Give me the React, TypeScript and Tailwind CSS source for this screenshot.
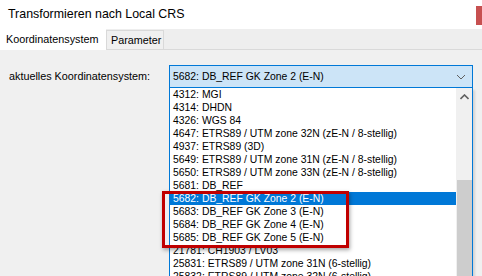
import React from "react";

const items = [
  "4312: MGI",
  "4314: DHDN",
  "4326: WGS 84",
  "4647: ETRS89 / UTM zone 32N (zE-N / 8-stellig)",
  "4937: ETRS89 (3D)",
  "5649: ETRS89 / UTM zone 31N (zE-N / 8-stellig)",
  "5650: ETRS89 / UTM zone 33N (zE-N / 8-stellig)",
  "5681: DB_REF",
  "5682: DB_REF GK Zone 2 (E-N)",
  "5683: DB_REF GK Zone 3 (E-N)",
  "5684: DB_REF GK Zone 4 (E-N)",
  "5685: DB_REF GK Zone 5 (E-N)",
  "21781: CH1903 / LV03",
  "25831: ETRS89 / UTM zone 31N (6-stellig)",
  "25832: ETRS89 / UTM zone 32N (6-stellig)",
];

export default function App() {
  return (
    <div
      className="relative w-[482px] h-[276px] overflow-hidden bg-[#f0f0f0] text-[10.8px] text-black"
      style={{ fontFamily: '"Liberation Sans", Arial, sans-serif' }}
    >
      {/* title bar */}
      <div className="relative h-[29px] bg-white flex items-center pl-[8px] text-[12.4px] whitespace-nowrap">
        Transformieren nach Local CRS
        <div className="absolute right-0 top-[6px] w-[6px] h-[19px] bg-[#c75050]" />
      </div>
      {/* tabs */}
      <div className="h-[21px] flex items-end border-b border-[#d9d9d9] bg-[#eeeeee]">
        <div className="h-[21px] w-[106px] bg-white flex items-center pl-[6px] -mb-px relative z-10 whitespace-nowrap">
          Koordinatensystem
        </div>
        <div className="h-[19px] w-[58px] border border-b-0 border-[#d9d9d9] bg-[#f0f0f0] flex items-center pl-[4px] whitespace-nowrap">
          Parameter
        </div>
      </div>
      {/* content */}
      <div className="flex pt-[15px]">
        <div className="w-[169px] pl-[9px] h-[23px] flex items-center whitespace-nowrap">aktuelles Koordinatensystem:</div>
        <div className="flex flex-col w-[304px] text-[10.4px]">
          <div className="h-[23px] border border-[#0078d7] bg-[#cce4f7] flex items-center pl-[3px] pr-[6px] justify-between whitespace-nowrap">
            <span>5682: DB_REF GK Zone 2 (E-N)</span>
            <svg width="10" height="6" viewBox="0 0 10 6">
              <path d="M1 1 L5 5 L9 1" stroke="#606060" strokeWidth="1" fill="none" />
            </svg>
          </div>
          <div className="flex border-x border-[#0078d7] bg-white h-[200px] shadow-[2px_2px_2px_rgba(0,0,0,0.12)]">
            <div className="flex-1 flex flex-col">
              {items.map((t, i) => (
                <div
                  key={t}
                  className={
                    "h-[13px] leading-[13px] pl-[3px] whitespace-nowrap " +
                    (i === 8 ? "bg-[#0078d7] text-white" : "")
                  }
                >
                  {t}
                </div>
              ))}
            </div>
            <div className="w-[16px] bg-[#f0f0f0] flex flex-col items-center">
              <div className="h-[17px] flex items-center justify-center">
                <svg width="9" height="6" viewBox="0 0 9 6">
                  <path d="M0.5 5 L4.5 1 L8.5 5" stroke="#606060" strokeWidth="1.6" fill="none" />
                </svg>
              </div>
              <div className="mt-[75px] w-[15px] flex-1 bg-[#cdcdcd]" />
            </div>
          </div>
        </div>
      </div>
      {/* red highlight box */}
      <div className="absolute left-[162px] top-[191px] w-[187px] h-[57px] border-[3px] border-[#c00000] shadow-[1px_2px_4px_rgba(0,0,0,0.35)]" />
    </div>
  );
}
